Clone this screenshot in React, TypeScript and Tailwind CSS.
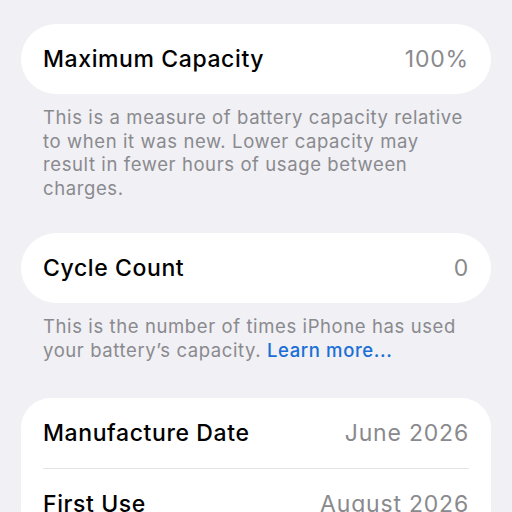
const font = { fontFamily: 'Inter, "Noto Sans", sans-serif' }

function Row({ label, value }: { label: string; value: string }) {
  return (
    <div className="flex h-[70px] items-center justify-between">
      <span className="text-[23px] font-medium tracking-[0.6px] text-black">{label}</span>
      <span className="text-[23px] tracking-[0.8px] text-[#8a8a8e]">{value}</span>
    </div>
  )
}

export default function App() {
  return (
    <div className="h-[512px] w-[512px] overflow-hidden bg-[#f0f0f5] px-[21px] pt-[24px]" style={font}>
      <div className="rounded-[35px] bg-white px-[22px]">
        <Row label="Maximum Capacity" value="100%" />
      </div>
      <p className="px-[22px] pt-[12px] text-[18.5px] leading-[23.5px] tracking-[0.6px] text-[#8a8a8e]">
        This is a measure of battery capacity relative to when it was new. Lower capacity may result in fewer
        hours of usage between charges.
      </p>

      <div className="mt-[33px] rounded-[35px] bg-white px-[22px]">
        <Row label="Cycle Count" value="0" />
      </div>
      <p className="px-[22px] pt-[12px] text-[18.5px] leading-[23.5px] tracking-[0.6px] text-[#8a8a8e]">
        This is the number of times iPhone has used your battery’s capacity.{' '}
        <span className="font-medium text-[#1a6fd4]">Learn more...</span>
      </p>

      <div className="mt-[36px] rounded-[30px] bg-white px-[22px]">
        <Row label="Manufacture Date" value="June 2026" />
        <div className="h-px bg-[#e4e4e8]" />
        <Row label="First Use" value="August 2026" />
      </div>
    </div>
  )
}
